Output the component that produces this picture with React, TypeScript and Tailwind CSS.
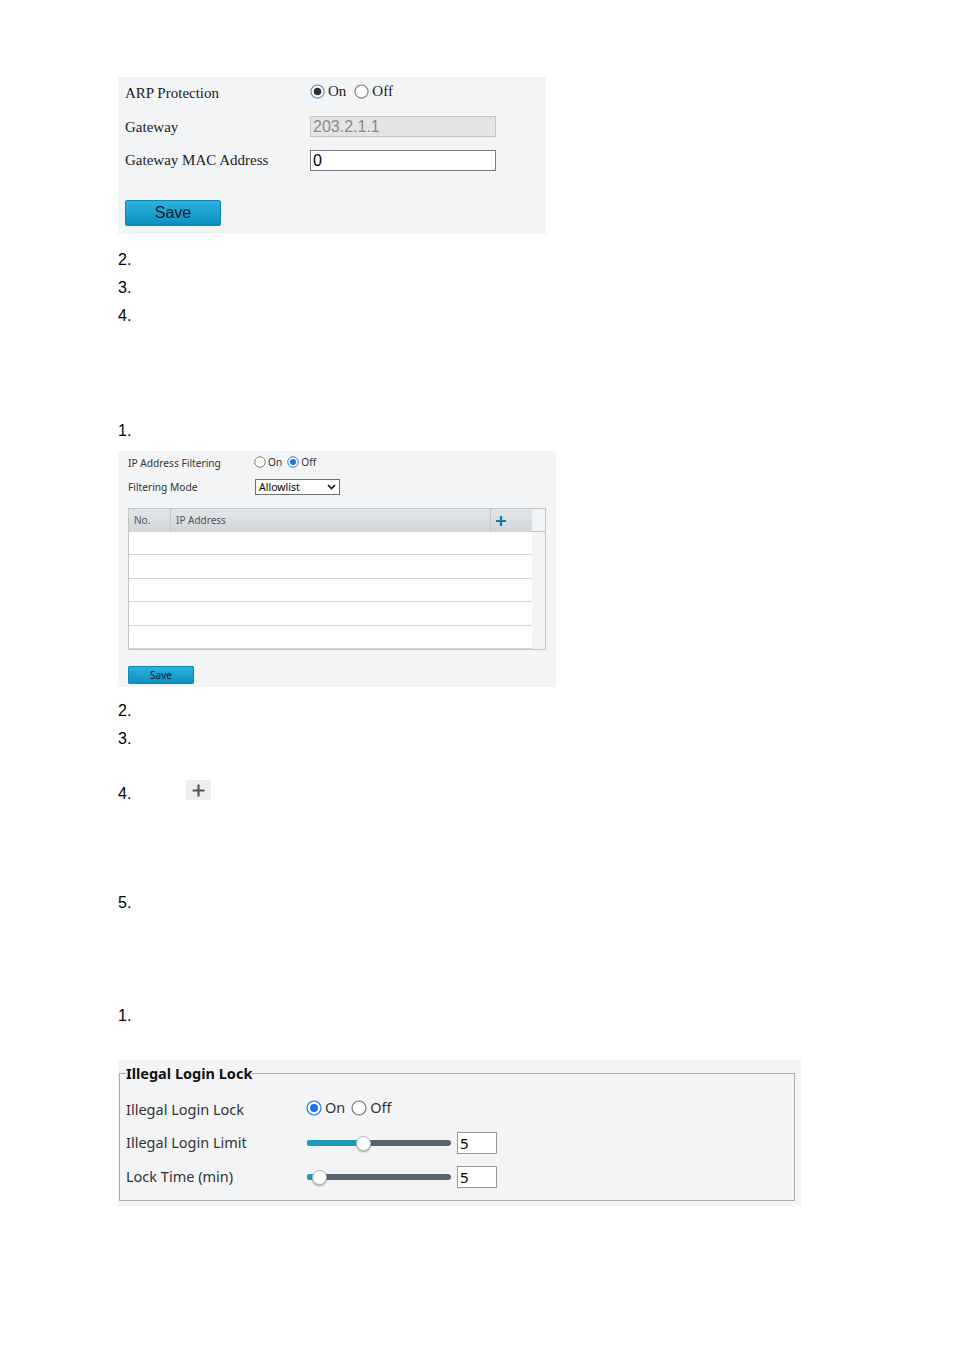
import React from "react";

function Radio({ checked, size = 15, tone = "dark" }: { checked?: boolean; size?: number; tone?: "dark" | "blue" }) {
  const dot = tone === "blue" ? "#1a73e8" : "#333333";
  const ring = checked ? (tone === "blue" ? "#1a73e8" : "#4a90c8") : "#767676";
  return (
    <svg width={size} height={size} viewBox="0 0 16 16" className="shrink-0">
      <circle cx="8" cy="8" r="7" fill="#fff" stroke={ring} strokeWidth="1.2" />
      {checked && <circle cx="8" cy="8" r="4" fill={dot} />}
    </svg>
  );
}

function Slider({ pct }: { pct: number }) {
  return (
    <div className="relative w-[144px] h-[16px] flex items-center">
      <div className="w-full h-[6px] rounded-full bg-[#56636e] overflow-hidden">
        <div className="h-full bg-[#1b9bc2]" style={{ width: `${pct}%` }} />
      </div>
      <div
        className="absolute top-[1px] w-[15px] h-[15px] rounded-full bg-white border border-[#b5b9bd] shadow-[0_1px_2px_rgba(0,0,0,0.35)]"
        style={{ left: `calc(${pct}% - 7px)` }}
      />
    </div>
  );
}

function Num({ n }: { n: string }) {
  return <div className="h-[28px] leading-[28px] text-[16px] text-black">{n}</div>;
}

export default function App() {
  return (
    <div className="min-h-[1349px] bg-white pl-[118px] pt-[77px] font-['Liberation_Sans',Arial,sans-serif]">
      {/* ARP protection */}
      <div className="w-[428px] h-[157px] bg-[#f3f4f6] pl-[7px] font-['Liberation_Serif',serif] text-[15px] text-[#222]">
        <div className="flex flex-col gap-[4px]">
          <div className="flex items-center h-[30px]">
            <span className="w-[185px] mt-[2px]">ARP Protection</span>
            <div className="flex items-center gap-[3px] -mt-[1px]">
              <Radio checked />
              <span className="mr-[5px]">On</span>
              <Radio />
              <span>Off</span>
            </div>
          </div>
          <div className="flex items-center h-[30px]">
            <span className="w-[185px] mt-[2px]">Gateway</span>
            <div className="w-[186px] h-[21px] bg-[#e4e4e4] border border-[#c4c4c4] px-[2px] leading-[19px] text-[16px] text-[#8a8a8a] font-['Liberation_Sans',Arial,sans-serif]">
              203.2.1.1
            </div>
          </div>
          <div className="flex items-center h-[30px]">
            <span className="w-[185px] mt-[1px]">Gateway MAC Address</span>
            <div className="w-[186px] h-[21px] bg-white border border-[#7a7a7a] px-[2px] leading-[19px] text-[16px] text-black font-['Liberation_Sans',Arial,sans-serif]">
              0
            </div>
          </div>
        </div>
        <button className="mt-[25px] w-[96px] h-[26px] rounded-[2px] border border-[#0d86b4] bg-gradient-to-b from-[#2ab3e0] to-[#0a8fc0] text-[16px] text-[#0c1a24] font-['Liberation_Sans',Arial,sans-serif]">
          Save
        </button>
      </div>

      <div className="mt-[12px]">
        <Num n="2." />
        <Num n="3." />
        <Num n="4." />
      </div>
      <div className="mt-[87px]">
        <Num n="1." />
      </div>

      {/* IP address filtering */}
      <div className="mt-[6px] w-[438px] h-[236px] bg-[#f3f4f6] pl-[10px] font-['Noto_Sans',sans-serif] text-[10.2px] text-[#333]">
        <div className="flex items-center h-[24px]">
          <span className="w-[126px] mt-[2px]">IP Address Filtering</span>
          <div className="flex items-center gap-[2px] -mt-[1px]">
            <Radio size={12} />
            <span className="mr-[3px]">On</span>
            <Radio size={12} checked tone="blue" />
            <span>Off</span>
          </div>
        </div>
        <div className="flex items-center h-[24px]">
          <span className="w-[127px] mt-[2px]">Filtering Mode</span>
          <div className="w-[85px] h-[16px] bg-white border border-[#6f6f6f] flex items-center justify-between px-[3px]">
            <span className="text-[10.5px] text-black leading-none">Allowlist</span>
            <svg width="9" height="6" viewBox="0 0 9 6">
              <path d="M1 1l3.5 3.5L8 1" fill="none" stroke="#111" strokeWidth="1.6" />
            </svg>
          </div>
        </div>
        <div className="mt-[9px] w-[418px] h-[142px] border border-[#c3c6c9] flex">
          <div className="w-[403px] flex flex-col">
            <div className="h-[23px] flex bg-gradient-to-b from-[#e3e7ea] to-[#cfd5da] text-[10px] text-[#555]">
              <div className="w-[42px] border-r border-[#c2c7cb] pl-[5px] leading-[23px]">No.</div>
              <div className="flex-1 border-r border-[#c2c7cb] pl-[5px] leading-[23px]">IP Address</div>
              <div className="w-[41px] flex items-center justify-start pl-[4px]">
                <svg width="12" height="12" viewBox="0 0 12 12">
                  <path d="M6 1v10M1 6h10" stroke="#137fa8" strokeWidth="2.2" />
                </svg>
              </div>
            </div>
            {[0, 1, 2, 3, 4].map((i) => (
              <div key={i} className="h-[23.6px] bg-white border-b border-[#d2d4d6]" />
            ))}
          </div>
          <div className="flex-1 bg-[#f3f4f6] flex flex-col">
            <div className="h-[23px] bg-[#f3f4f6] border-b border-[#c3c6c9]" />
          </div>
        </div>
        <button className="mt-[16px] w-[66px] h-[18px] rounded-[1px] border border-[#0d86b4] bg-gradient-to-b from-[#2ab3e0] to-[#0a8fc0] text-[10px] text-[#0c1a24] leading-none">
          Save
        </button>
      </div>

      <div className="mt-[10px]">
        <Num n="2." />
        <Num n="3." />
      </div>
      <div className="mt-[27px] flex items-start">
        <Num n="4." />
        <div className="ml-[55px] w-[25px] h-[20px] bg-[#eeeeee] flex items-center justify-center">
          <svg width="13" height="13" viewBox="0 0 12 12">
            <path d="M6 0.5v11M0.5 6h11" stroke="#555" strokeWidth="2" />
          </svg>
        </div>
      </div>
      <div className="mt-[81px]">
        <Num n="5." />
      </div>
      <div className="mt-[85px]">
        <Num n="1." />
      </div>

      {/* Illegal login lock */}
      <div className="mt-[30px] w-[683px] h-[146px] bg-[#f3f4f6] pl-[1px] pt-[5px] font-['Noto_Sans',sans-serif] text-[14.5px] text-[#333]">
        <fieldset className="w-[676px] h-[136px] border border-[#a9abad] pl-[6px] pr-[6px] m-0">
          <legend className="font-bold text-[#111] text-[14.5px] leading-[16px] px-0">Illegal Login Lock</legend>
          <div className="flex flex-col mt-[12px]">
            <div className="flex items-center h-[33px]">
              <span className="w-[180px]">Illegal Login Lock</span>
              <div className="flex items-center gap-[3px] -mt-[4px]">
                <Radio size={16} checked tone="blue" />
                <span className="mr-[3px]">On</span>
                <Radio size={16} />
                <span>Off</span>
              </div>
            </div>
            <div className="flex items-center h-[34px]">
              <span className="w-[181px]">Illegal Login Limit</span>
              <Slider pct={39} />
              <div className="ml-[6px] w-[40px] h-[22px] bg-white border border-[#9a9a9a] pl-[2px] leading-[20px] text-[15px] text-black">5</div>
            </div>
            <div className="flex items-center h-[34px]">
              <span className="w-[181px]">Lock Time (min)</span>
              <Slider pct={8} />
              <div className="ml-[6px] w-[40px] h-[22px] bg-white border border-[#9a9a9a] pl-[2px] leading-[20px] text-[15px] text-black">5</div>
            </div>
          </div>
        </fieldset>
      </div>
    </div>
  );
}
